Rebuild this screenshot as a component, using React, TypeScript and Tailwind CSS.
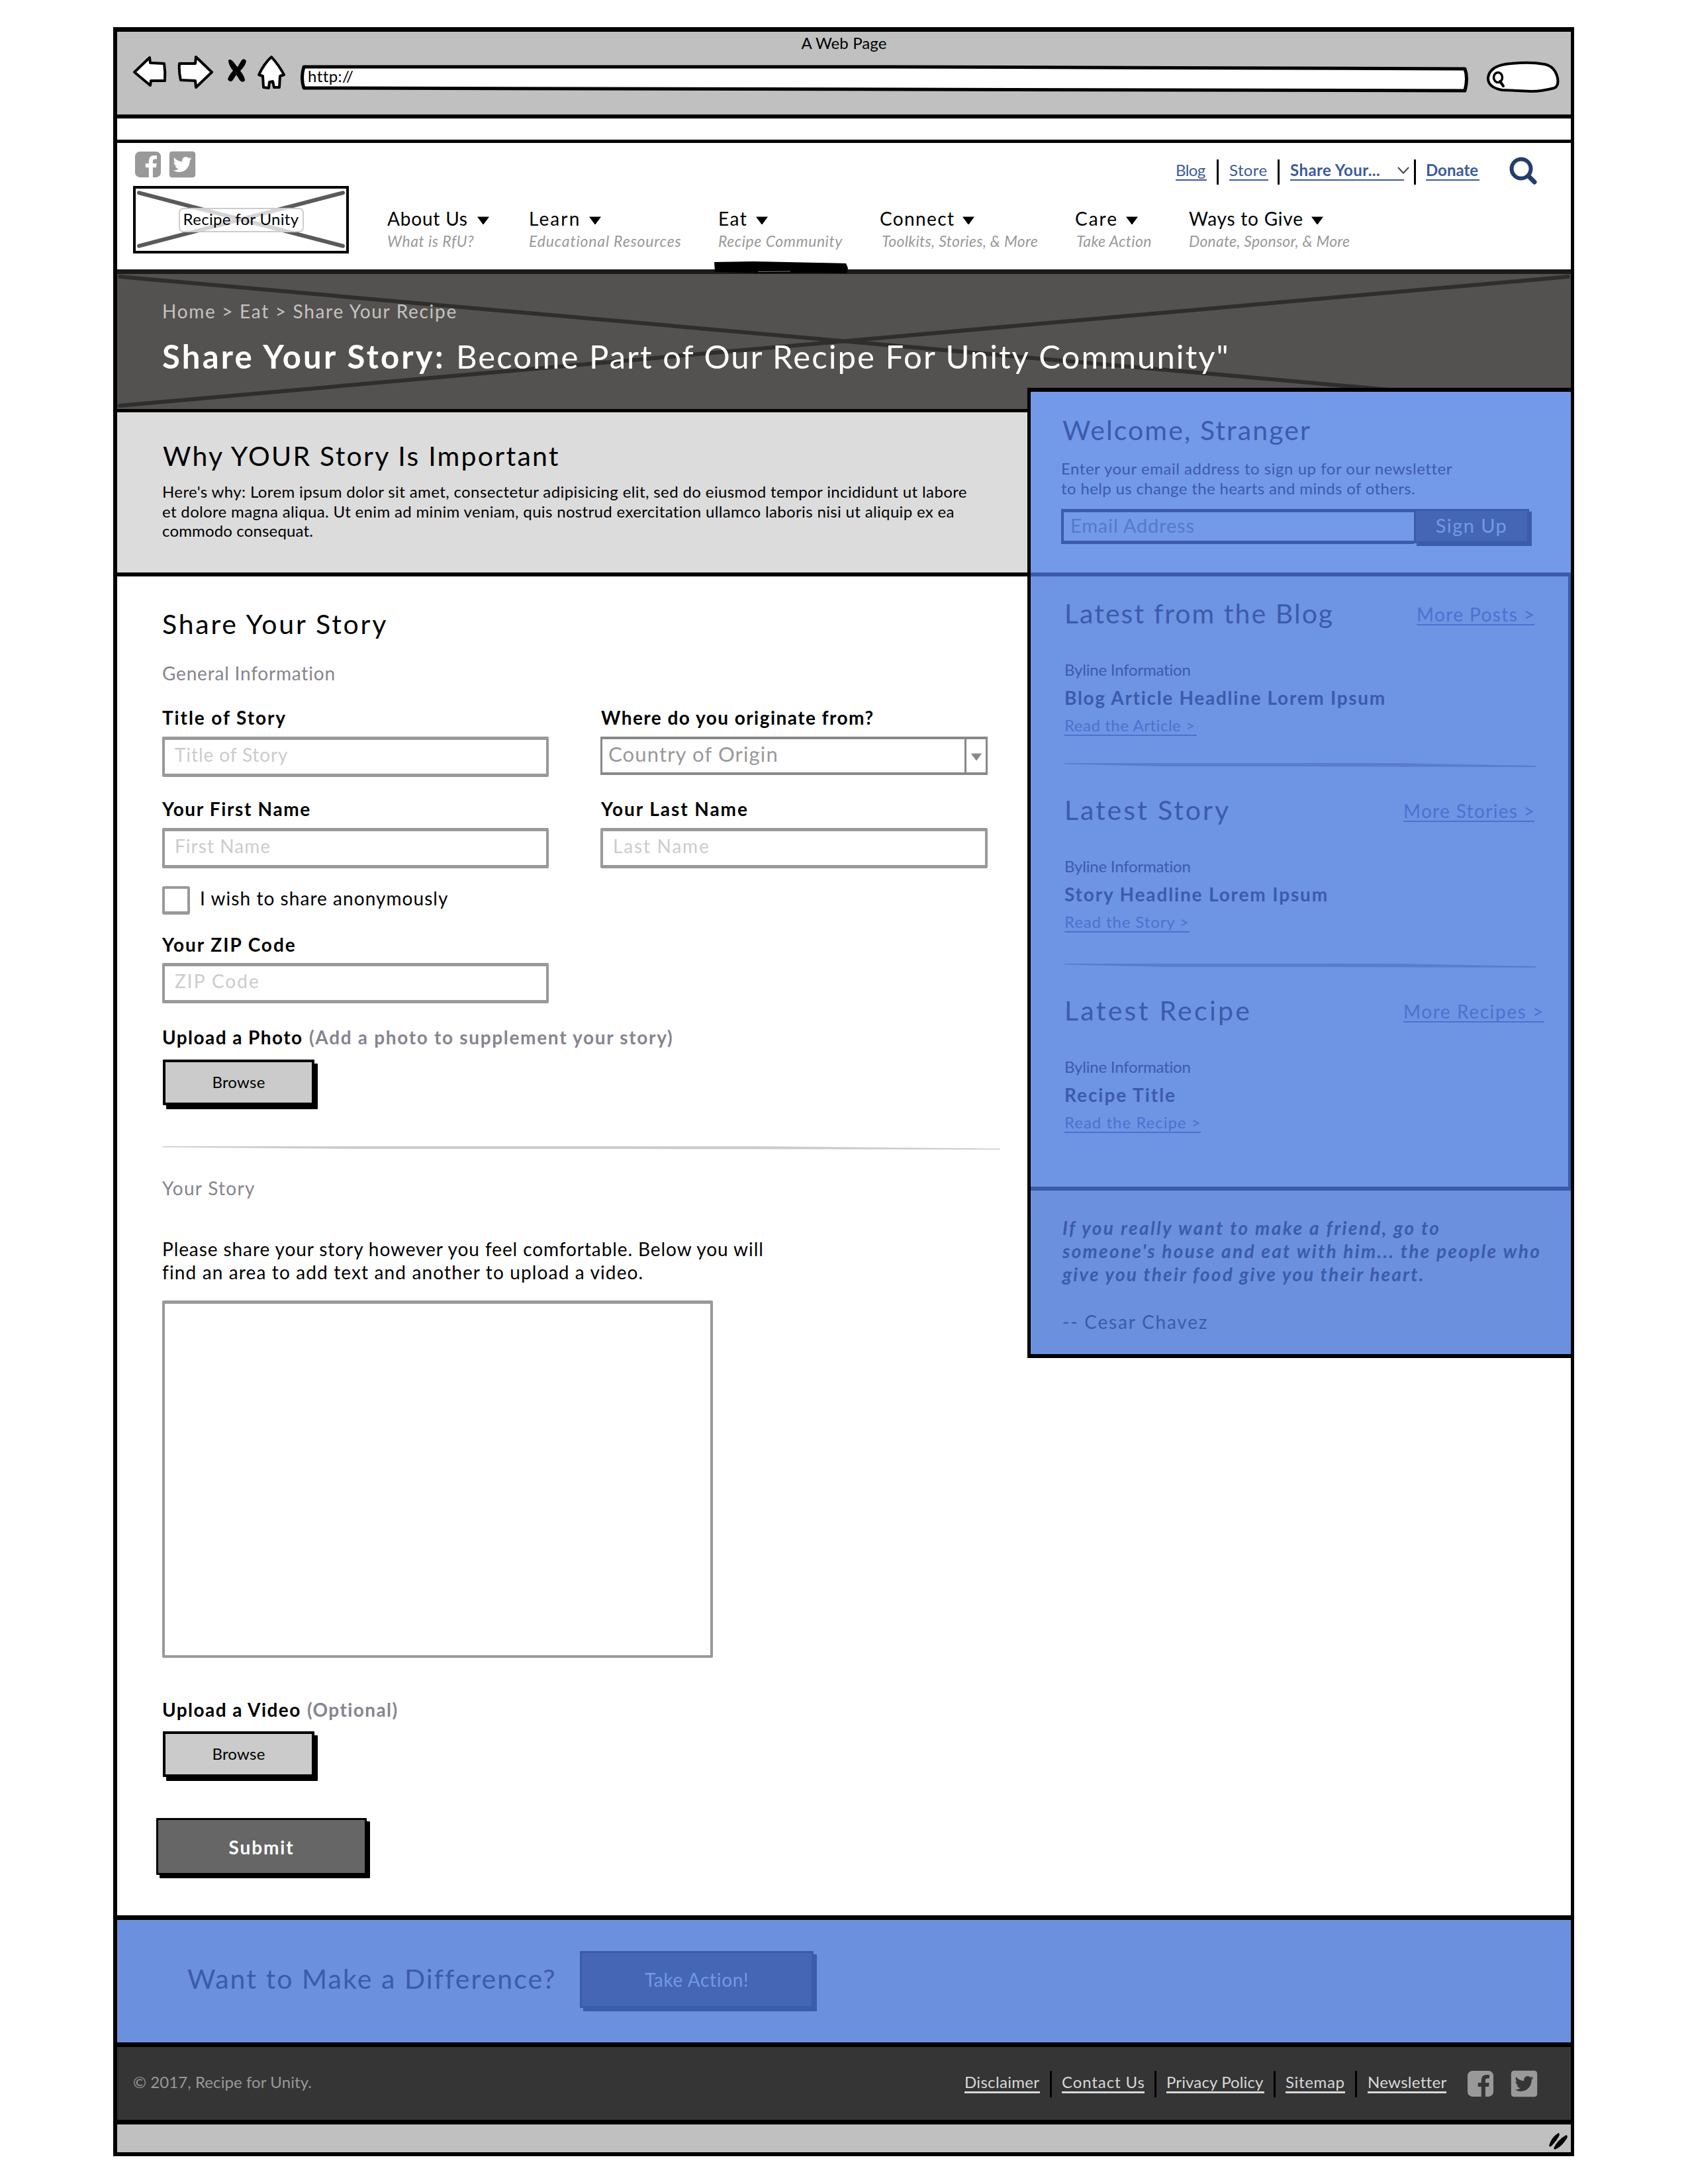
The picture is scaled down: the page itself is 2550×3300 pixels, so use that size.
import type { ReactNode } from "react";
import { FaTwitterSquare } from "react-icons/fa";

function FacebookSquare() {
  return (
    <svg viewBox="-118 10 1772 1772" className="h-[45px] w-[45px]" fill="currentColor">
      <path d="M1248 128q119 0 203.5 84.5t84.5 203.5v960q0 119-84.5 203.5t-203.5 84.5h-188v-595h199l30-232h-229v-148q0-56 23.5-84t91.5-28l122-1v-207q-63-9-178-9-136 0-217.5 80t-81.5 226v171h-200v232h200v595h-532q-119 0-203.5-84.5t-84.5-203.5v-960q0-119 84.5-203.5t203.5-84.5h960z" />
    </svg>
  );
}

function Caret({ className }: { className: string }) {
  return (
    <svg viewBox="0 0 18 12" className={className}>
      <path d="M0 0.5 L18 0.5 L9.5 12 L8.5 12 Z" fill="currentColor" />
    </svg>
  );
}

function BrowserChrome() {
  return (
    <div className="h-[131px] border-b-[6px] border-black bg-[#c0c0c0] pt-[5px]">
      <div className="text-center text-[24px] leading-none tracking-[0.1px]">A Web Page</div>
      <div className="mt-[4px] flex items-start pl-[22px] text-black">
        <svg viewBox="0 0 56 56" className="mt-[1px] h-[56px] w-[56px] shrink-0" fill="#fff" stroke="#000" strokeWidth="4" strokeLinejoin="round">
          <path d="M4 27 L27 5 L28 13 L49 14 Q51 27 50 40 L29 40 L28 47 Z" />
        </svg>
        <svg viewBox="0 0 56 56" className="ml-[13px] mt-[1px] h-[56px] w-[56px] shrink-0" fill="#fff" stroke="#000" strokeWidth="4" strokeLinejoin="round">
          <path d="M3 14 Q2 27 5 39 L27 40 L28 50 L52 27 L28 4 L27 14 Z" />
        </svg>
        <svg viewBox="0 0 32 40" className="ml-[18px] mt-[6px] h-[40px] w-[32px] shrink-0">
          <path d="M3 4 Q6 1 12 8 Q16 14 17 14 L23 4 Q27 0 30 5 Q29 12 21 20 Q28 29 28 35 Q24 39 20 34 L15 26 L9 35 Q5 38 2 33 Q4 26 10 20 Q3 11 3 4 Z" fill="#000" />
        </svg>
        <svg viewBox="0 0 44 56" className="ml-[14px] mt-[1px] h-[56px] w-[44px] shrink-0" fill="#fff" stroke="#000" strokeWidth="4" strokeLinejoin="round">
          <path d="M22 4 Q33 16 41 31 L35 33 L34 50 L26 50 L24 41 L19 42 L18 51 L10 50 L9 33 L3 31 Q11 14 22 4 Z" />
        </svg>
        <div className="relative ml-[22px] mt-[17px] h-[42px] w-[1764px] pl-[11px] pt-[5px]">
          <svg viewBox="0 0 1764 42" className="absolute inset-0 h-[42px] w-[1764px]" fill="#fff" stroke="#000" strokeWidth="5" strokeLinejoin="round">
            <path d="M5 3 L900 3 L1759 6 Q1764 20 1759 39 L900 37 L5 35 Q0 20 5 3 Z" />
          </svg>
          <div className="relative text-[24px] leading-none tracking-[0.43px]">http://</div>
        </div>
        <svg viewBox="0 0 112 50" className="ml-[27px] mt-[11px] h-[50px] w-[112px] shrink-0" fill="none" stroke="#000" strokeWidth="4" strokeLinecap="round">
          <path d="M24 44 Q2 40 3 25 Q6 6 38 4 Q66 1 88 5 Q104 8 108 26 Q110 38 103 41 Q84 46 68 46 Z" fill="#fff" />
          <ellipse cx="18" cy="25" rx="6.5" ry="7.5" fill="#fff" strokeWidth="3.5" />
          <path d="M21 31 L26 38" />
        </svg>
      </div>
    </div>
  );
}

function NavItem({ title, sub, className, titleClass, subClass, active }: { title: string; sub: string; className: string; titleClass: string; subClass: string; active?: boolean }) {
  return (
    <div className={"relative shrink-0 whitespace-nowrap " + className}>
      <div className="flex text-[28px] leading-none">
        <span className={titleClass}>{title}</span>
        <Caret className="mt-[11px] h-[12px] w-[18px]" />
      </div>
      <div className={"mt-[9px] text-[23px] italic leading-none text-[#999] " + subClass}>{sub}</div>
      {active && (
        <svg viewBox="0 0 202 18" className="absolute left-[-6px] top-[79px] z-10 h-[18px] w-[202px]">
          <path d="M0 1 L60 0 L199 3 L202 10 L200 18 L150 17 L80 18 L1 16 Z" fill="#000" />
          <path d="M66 15.5 L115 15" stroke="#777" strokeWidth="1" />
        </svg>
      )}
    </div>
  );
}

function Header() {
  return (
    <header className="flex h-[191px]">
      <div className="w-[408px] shrink-0 pl-[24px] pt-[10px]">
        <div className="flex gap-[7px] text-[45px] leading-none text-[#999]">
          <FacebookSquare />
          <FaTwitterSquare />
        </div>
        <div className="relative mt-[10px] flex h-[102px] w-[326px] items-center justify-center border-[4.5px] border-black">
          <svg viewBox="0 0 317 93" className="absolute inset-0 h-full w-full" stroke="#5a5a5a" strokeWidth="6" strokeLinecap="round">
            <path d="M5 6 L312 86 M312 6 L5 86" />
          </svg>
          <div className="relative flex h-[37px] w-[189px] items-center justify-center rounded-[7px] border-2 border-[#ccc] bg-white/75 pb-[3px] text-[24px] leading-none tracking-[0.31px]">Recipe for Unity</div>
        </div>
      </div>
      <div className="pt-[21px]">
        <div className="ml-[1191px] flex h-[45px] whitespace-nowrap text-[24px] leading-none text-[#3d5a9b]">
          <a className="mt-[8px] h-[28px] w-[47px] border-b-2 border-[#3d5a9b] tracking-[-0.6px]">Blog</a>
          <i className="ml-[15px] mt-[4px] h-[38px] w-[3px] bg-black" />
          <a className="ml-[16px] mt-[8px] h-[28px] w-[59px] border-b-2 border-[#3d5a9b] tracking-[0.4px]">Store</a>
          <i className="ml-[14px] mt-[4px] h-[38px] w-[3px] bg-black" />
          <a className="ml-[16px] mt-[8px] h-[28px] w-[172px] border-b-2 border-[#3d5a9b] font-bold tracking-[0.45px]">Share Your...</a>
          <svg viewBox="0 0 18 12" className="-ml-[10px] mt-[15px] h-[12px] w-[18px]" fill="none" stroke="#444" strokeWidth="2">
            <path d="M1 1 L9 9.5 L17 1" />
          </svg>
          <i className="ml-[7px] mt-[4px] h-[38px] w-[3px] bg-black" />
          <a className="ml-[15px] mt-[8px] h-[28px] w-[81px] border-b-2 border-[#3d5a9b] font-bold">Donate</a>
          <svg viewBox="0 0 44 44" className="ml-[45px] h-[44px] w-[44px]" fill="none" stroke="#233e6d" strokeLinecap="round">
            <circle cx="18" cy="18" r="14.5" strokeWidth="6" />
            <path d="M29 29 L38 38" strokeWidth="7" />
          </svg>
        </div>
        <nav className="mt-[34px] flex">
          <NavItem title="About Us" sub="What is RfU?" className="w-[214px]" titleClass="w-[136px] tracking-[0.81px]" subClass="tracking-[0.5px]" />
          <NavItem title="Learn" sub="Educational Resources" className="w-[286px]" titleClass="w-[91px] tracking-[2.1px]" subClass="tracking-[0.83px]" />
          <NavItem title="Eat" sub="Recipe Community" className="w-[244px]" titleClass="w-[57px] tracking-[1.5px]" subClass="tracking-[0.55px]" active />
          <NavItem title="Connect" sub="Toolkits, Stories, & More" className="w-[295px]" titleClass="w-[125px] tracking-[1.38px]" subClass="pl-[3px] tracking-[0.3px]" />
          <NavItem title="Care" sub="Take Action" className="w-[172px]" titleClass="w-[77px] tracking-[2px]" subClass="pl-[2px] tracking-[0.35px]" />
          <NavItem title="Ways to Give" sub="Donate, Sponsor, & More" className="w-[260px]" titleClass="w-[185px] tracking-[0.78px]" subClass="tracking-[0.22px]" />
        </nav>
      </div>
    </header>
  );
}

function Hero() {
  return (
    <section className="relative h-[216px] border-b-[5px] border-t-[7px] border-b-black border-t-[#1c1b18] bg-[#545250] pl-[68px] pt-[42px]">
      <svg viewBox="0 0 2196 204" preserveAspectRatio="none" className="absolute inset-0 h-full w-full" stroke="#2f2e2c" strokeWidth="6" strokeLinecap="round">
        <path d="M4 4 L2192 199 M2192 4 L4 199" />
      </svg>
      <div className="relative whitespace-nowrap text-[28px] leading-none tracking-[1.69px] text-[#c4c3c2]">Home &gt; Eat &gt; Share Your Recipe</div>
      <h1 className="relative mt-[30px] flex whitespace-nowrap text-[49px] leading-none text-white">
        <span className="w-[444px] font-bold tracking-[3.25px]">Share Your Story:</span>
        <span className="tracking-[2.05px]">Become Part of Our Recipe For Unity Community"</span>
      </h1>
    </section>
  );
}

function Label({ children, className }: { children: ReactNode; className: string }) {
  return <div className={"whitespace-nowrap text-[28px] font-bold leading-none " + className}>{children}</div>;
}

function Field({ children, className }: { children: string; className: string }) {
  return (
    <div className={"h-[61px] rounded-[2px] border-x-[4px] border-y-[5px] border-[#999] bg-white pl-[15px] pt-[8px] text-[28px] leading-none text-[#ccc] " + className}>{children}</div>
  );
}

function Browse({ className }: { className: string }) {
  return (
    <div className={"ml-[1px] h-[69px] w-[229px] rounded-[1px] border-[4px] border-black bg-[#cbcbcb] pt-[18px] text-center text-[24px] leading-none tracking-[0.25px] shadow-[5px_6px_0_#000] " + className}>Browse</div>
  );
}

function StoryForm() {
  return (
    <section className="h-[2023px] pl-[68px] pt-[51px]">
      <h2 className="text-[41px] leading-none tracking-[2.78px]">Share Your Story</h2>
      <div className="mt-[40px] text-[28px] leading-none tracking-[0.8px] text-[#85858f]">General Information</div>
      <div className="mt-[39px] grid w-[1247px] grid-cols-[584px_585px] justify-between gap-y-[34px]">
        <div>
          <Label className="tracking-[1.9px]">Title of Story</Label>
          <Field className="mt-[15px] tracking-[0.9px]">Title of Story</Field>
        </div>
        <div>
          <Label className="pl-[1px] tracking-[1.45px]">Where do you originate from?</Label>
          <div className="mt-[15px] flex h-[58px] border-x-[3px] border-b-[4px] border-t-[4px] border-[#888]">
            <div className="w-[547px] pl-[9px] pt-[7px] text-[31px] leading-none tracking-[1.14px] text-[#999]">Country of Origin</div>
            <div className="flex flex-1 justify-center border-l-[3px] border-[#888] pt-[21px] text-[#888]">
              <Caret className="h-[11px] w-[18px]" />
            </div>
          </div>
        </div>
        <div>
          <Label className="tracking-[1.65px]">Your First Name</Label>
          <Field className="mt-[15px] tracking-[1.04px]">First Name</Field>
        </div>
        <div>
          <Label className="pl-[1px] tracking-[1.95px]">Your Last Name</Label>
          <Field className="mt-[15px] tracking-[1.8px]">Last Name</Field>
        </div>
      </div>
      <div className="mt-[27px] flex h-[43px]">
        <span className="w-[42px] rounded-[3px] border-[4px] border-b-[5px] border-[#999]" />
        <span className="ml-[15px] mt-[4px] text-[28px] leading-none tracking-[1.05px]">I wish to share anonymously</span>
      </div>
      <Label className="mt-[31px] tracking-[1.95px]">Your ZIP Code</Label>
      <Field className="mt-[14px] w-[584px] tracking-[2px]">ZIP Code</Field>
      <Label className="mt-[37px] flex">
        <span className="w-[222px] tracking-[1.43px]">Upload a Photo</span>
        <span className="tracking-[1.68px] text-[#85858f]">(Add a photo to supplement your story)</span>
      </Label>
      <Browse className="mt-[20px]" />
      <svg viewBox="0 0 1266 5" className="mt-[62px] h-[5px] w-[1266px]">
        <path d="M0 0 L900 0 L1266 3.5 L1266 5 L700 4 L300 4 L0 1.5 Z" fill="#ccc" />
      </svg>
      <div className="mt-[44px] text-[28px] leading-none tracking-[1.3px] text-[#85858f]">Your Story</div>
      <p className="mt-[61px] whitespace-nowrap text-[28px] leading-[35px]">
        <span className="tracking-[0.91px]">Please share your story however you feel comfortable. Below you will</span>
        <br />
        <span className="tracking-[1.13px]">find an area to add text and another to upload a video.</span>
      </p>
      <div className="mt-[25px] h-[540px] w-[832px] rounded-[2px] border-[4px] border-t-[5px] border-[#999]" />
      <Label className="mt-[64px] flex">
        <span className="w-[219px] tracking-[1.43px]">Upload a Video</span>
        <span className="tracking-[1.4px] text-[#85858f]">(Optional)</span>
      </Label>
      <Browse className="mt-[19px]" />
      <div className="-ml-[9px] mt-[62px] h-[86px] w-[318px] rounded-[1px] border-[3px] border-black bg-[#666] pt-[27px] text-center text-[28px] font-bold leading-none tracking-[1.85px] text-white shadow-[5px_5px_0_#000]">Submit</div>
    </section>
  );
}

type EntryProps = { heading: string; headingClass: string; more: string; moreClass: string; title: string; titleClass: string; read: string; readClass: string; className: string };

function Entry({ heading, headingClass, more, moreClass, title, titleClass, read, readClass, className }: EntryProps) {
  return (
    <article className={"whitespace-nowrap text-[#3c5bab] " + className}>
      <div className="flex h-[41px]">
        <h3 className={"pt-[1px] text-[41px] leading-none " + headingClass}>{heading}</h3>
        <a className={"mt-[9px] h-[31px] border-b-2 border-[#4a72cf] text-[28px] leading-none text-[#4a72cf] " + moreClass}>{more}</a>
      </div>
      <div className="mt-[54px] text-[24px] leading-none tracking-[-0.2px]">Byline Information</div>
      <div className={"mt-[16px] text-[28px] font-bold leading-none " + titleClass}>{title}</div>
      <a className={"mt-[16px] block h-[28px] border-b-2 border-[#4a72cf] text-[24px] leading-none text-[#4a72cf] " + readClass}>{read}</a>
    </article>
  );
}

function Rule() {
  return (
    <svg viewBox="0 0 712 6" preserveAspectRatio="none" className="h-[6px] w-[712px]">
      <path d="M0 0 L500 0 L712 4 L712 6 L350 5 L150 5 L0 1.5 Z" fill="#5a7dcb" />
    </svg>
  );
}

function Sidebar() {
  return (
    <aside className="relative z-10 -mr-[5px] -mt-[37px] h-[1466px] w-[826px] shrink-0 border-x-[5px] border-y-[6px] border-black text-[#3c5bab]">
      <section className="h-[279px] whitespace-nowrap border-b-[6px] border-[#3b5ba9] bg-[#7399e9] pl-[46px] pt-[37px]">
        <h2 className="pl-[2px] text-[41px] leading-none tracking-[2.09px]">Welcome, Stranger</h2>
        <p className="mt-[23px] text-[24px] leading-[29.5px]">
          <span className="tracking-[0.53px]">Enter your email address to sign up for our newsletter</span>
          <br />
          <span className="tracking-[0.36px]">to help us change the hearts and minds of others.</span>
        </p>
        <div className="mt-[17px] flex">
          <div className="h-[53px] w-[533px] border-y-[5px] border-l-[4px] border-[#3b5bab] pl-[10px] pt-[5px] text-[29px] leading-none tracking-[0.83px] text-[#5479cb]">Email Address</div>
          <div className="h-[52px] w-[174px] border-[3px] border-[#3b5bab] bg-[#4466b4] pt-[7px] text-center text-[29px] leading-none tracking-[1.43px] text-[#7399e9] shadow-[4px_4px_0_#3b5bab]">Sign Up</div>
        </div>
      </section>
      <section className="h-[928px] border-b-[6px] border-r-[4px] border-[#3b5ba9] bg-[#6e94e4] pl-[51px] pt-[34px]">
        <Entry className="h-[248px]" heading="Latest from the Blog" headingClass="w-[532px] tracking-[2.05px]" more="More Posts >" moreClass="w-[178px] tracking-[1.4px]" title="Blog Article Headline Lorem Ipsum" titleClass="tracking-[1.7px]" read="Read the Article >" readClass="w-[200px] tracking-[0.55px]" />
        <Rule />
        <Entry className="mt-[43px] h-[254px]" heading="Latest Story" headingClass="w-[512px] tracking-[2.95px]" more="More Stories >" moreClass="w-[198px] tracking-[1.34px]" title="Story Headline Lorem Ipsum" titleClass="tracking-[1.85px]" read="Read the Story >" readClass="w-[189px] tracking-[0.9px]" />
        <Rule />
        <Entry className="mt-[43px]" heading="Latest Recipe" headingClass="w-[512px] tracking-[3.3px]" more="More Recipes >" moreClass="w-[213px] tracking-[1.6px]" title="Recipe Title" titleClass="tracking-[1.95px]" read="Read the Recipe >" readClass="w-[206px] tracking-[1px]" />
      </section>
      <section className="h-[247px] whitespace-nowrap bg-[#6b90de] pl-[48px] pt-[39px] text-[28px]">
        <p className="font-bold italic leading-[35px]">
          <span className="tracking-[2.4px]">If you really want to make a friend, go to</span>
          <br />
          <span className="tracking-[2.29px]">someone's house and eat with him... the people who</span>
          <br />
          <span className="tracking-[2.19px]">give you their food give you their heart.</span>
        </p>
        <div className="mt-[40px] leading-none tracking-[1.78px]">-- Cesar Chavez</div>
      </section>
    </aside>
  );
}

function Footer() {
  return (
    <footer className="flex h-[117px] whitespace-nowrap border-b-[7px] border-black bg-[#353535] pl-[24px] pt-[36px] text-[24px] leading-none">
      <div className="w-[1256px] pt-[5px] tracking-[0.08px] text-[#999]">© 2017, Recipe for Unity.</div>
      <div className="flex text-[#d8d8d8]">
        <a className="mt-[5px] h-[29px] w-[114px] border-b-[3px] border-[#d8d8d8] tracking-[0.32px]">Disclaimer</a>
        <i className="ml-[15px] h-[40px] w-[3px] bg-black" />
        <a className="ml-[15px] mt-[5px] h-[29px] w-[125px] border-b-[3px] border-[#d8d8d8] tracking-[0.9px]">Contact Us</a>
        <i className="ml-[15px] h-[40px] w-[3px] bg-black" />
        <a className="ml-[15px] mt-[5px] h-[29px] w-[148px] border-b-[3px] border-[#d8d8d8] tracking-[0.13px]">Privacy Policy</a>
        <i className="ml-[14px] h-[40px] w-[3px] bg-black" />
        <a className="ml-[15px] mt-[5px] h-[29px] w-[90px] border-b-[3px] border-[#d8d8d8] tracking-[0.67px]">Sitemap</a>
        <i className="ml-[15px] h-[40px] w-[3px] bg-black" />
        <a className="ml-[16px] mt-[5px] h-[29px] w-[119px] border-b-[3px] border-[#d8d8d8] tracking-[0.3px]">Newsletter</a>
      </div>
      <div className="-mt-[3px] ml-[29px] flex gap-[21px] text-[45px] text-[#999]">
        <FacebookSquare />
        <FaTwitterSquare />
      </div>
    </footer>
  );
}

export default function App() {
  return (
    <div className="h-[3300px] w-[2550px] bg-white pt-[41px] font-['Lato',sans-serif] text-black">
      <div className="ml-[171px] h-[3217px] w-[2207px] border-b-[6px] border-l-[6px] border-r-[5px] border-t-[7px] border-black bg-white">
        <BrowserChrome />
        <div className="h-[37px] border-b-[5px] border-black" />
        <Header />
        <Hero />
        <main className="flex">
          <div className="w-[1375px] shrink-0">
            <section className="h-[248px] whitespace-nowrap border-b-[6px] border-black bg-[#dcdcdc] pl-[68px] pt-[45px]">
              <h2 className="pl-[1px] text-[41px] leading-none tracking-[2.25px]">Why YOUR Story Is Important</h2>
              <p className="mt-[19px] text-[24px] leading-[29.5px]">
                <span className="tracking-[0.385px]">Here's why: Lorem ipsum dolor sit amet, consectetur adipisicing elit, sed do eiusmod tempor incididunt ut labore</span>
                <br />
                <span className="tracking-[0.34px]">et dolore magna aliqua. Ut enim ad minim veniam, quis nostrud exercitation ullamco laboris nisi ut aliquip ex ea</span>
                <br />
                <span className="tracking-[0.15px]">commodo consequat.</span>
              </p>
            </section>
            <StoryForm />
          </div>
          <Sidebar />
        </main>
        <section className="flex h-[199px] border-y-[7px] border-black bg-[#6b90de] pl-[106px]">
          <h2 className="w-[593px] whitespace-nowrap pt-[68px] text-[41px] leading-none tracking-[2.05px] text-[#3c5bab]">Want to Make a Difference?</h2>
          <div className="mt-[47px] h-[86px] w-[353px] border-[3px] border-[#3b5bab] bg-[#4466b4] pt-[26px] text-center text-[28px] leading-none tracking-[0.65px] text-[#7398e8] shadow-[5px_5px_0_#3b5bab]">Take Action!</div>
        </section>
        <Footer />
        <div className="flex h-[42px] justify-end bg-[#c0c0c0] pr-[4px] pt-[12px]">
          <svg viewBox="0 0 30 26" className="h-[26px] w-[30px]">
            <path d="M1 20 Q4 8 15 1 Q18 1 16 6 Q10 16 3 22 Z M8 24 Q14 11 27 4 Q30 5 28 9 Q20 22 10 26 Z" fill="#000" />
          </svg>
        </div>
      </div>
    </div>
  );
}
